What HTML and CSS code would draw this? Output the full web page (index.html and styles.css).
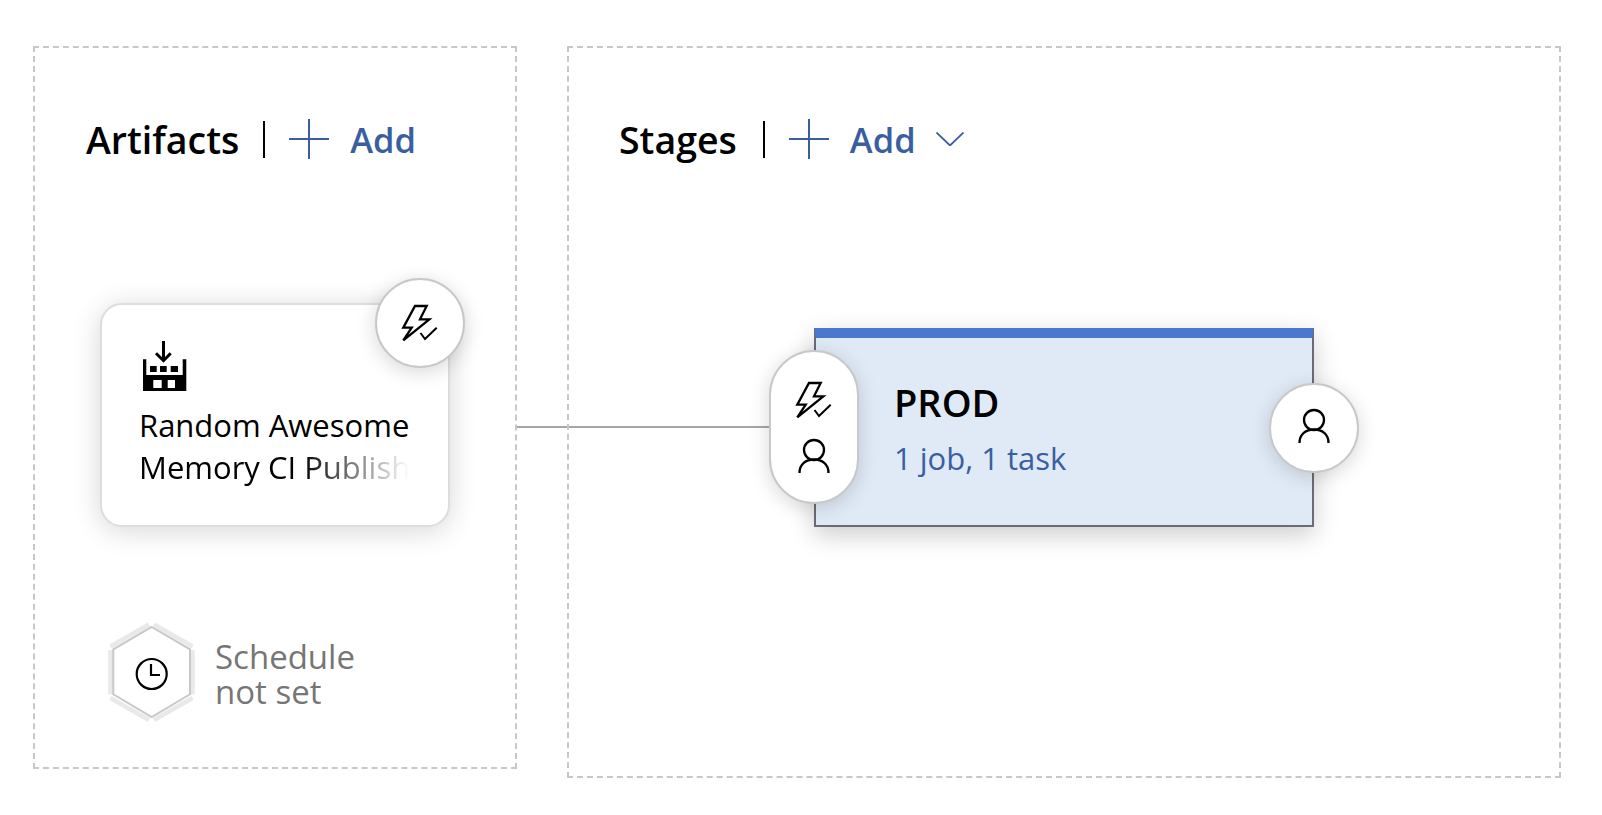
FILE: index.html
```html
<!DOCTYPE html>
<html lang="en">
<head>
<meta charset="utf-8">
<title>Pipeline</title>
<link rel="stylesheet" href="styles.css">
</head>
<body>
<svg class="defs" width="0" height="0" aria-hidden="true">
  <symbol id="bolt" viewBox="0 0 40 40">
    <path d="M15 3H26.700L20 16.300H29.300L3.300 37.300L11.700 24.700H3.300Z" fill="none" stroke="#000" stroke-width="2.300"/>
    <path d="M20.500 30L25 36L36.700 24.700" fill="none" stroke="#000" stroke-width="2"/>
  </symbol>
  <symbol id="person" viewBox="0 0 40 40">
    <circle cx="20" cy="12" r="10" fill="none" stroke="#000" stroke-width="2.300"/>
    <path d="M5.500 35C5.500 26 12 21.500 20 21.500S34.500 26 34.500 35" fill="none" stroke="#000" stroke-width="2.300"/>
  </symbol>
  <symbol id="plus" viewBox="0 0 40 40">
    <path d="M0 20H40M20 0V40" fill="none" stroke="#3a5fa0" stroke-width="2"/>
  </symbol>
</svg>
<main class="canvas">
  <div class="connector"></div>
  <section class="panel panel-artifacts">
    <header class="head">
      <h2 class="title">Artifacts</h2>
      <span class="sep"></span>
      <svg class="plus"><use href="#plus"/></svg>
      <span class="add">Add</span>
    </header>
    <div class="artifact">
      <svg class="build" viewBox="0 0 44 52">
        <path d="M0 18.300H3.300V34H39.700V18.300H43.300V50H0ZM10.300 39V47H18.700V39ZM24.700 39V47H32V39ZM7 25H13.700V31H7ZM17 25H23.700V31H17ZM27.700 25H35V31H27.700Z" fill="#000" fill-rule="evenodd"/>
        <path d="M20.500 0V19M13 12.300L20.500 19.700L27.700 12.300" fill="none" stroke="#000" stroke-width="3"/>
      </svg>
      <p class="artifact-name"><span class="line">Random Awesome</span> <span class="line line-fade">Memory CI Publish</span></p>
      <div class="circle circle-trigger"><svg class="ico"><use href="#bolt"/></svg></div>
    </div>
    <div class="schedule">
      <svg class="hex" viewBox="0 0 96 106">
        <g fill="none" stroke="#e9e9e9" stroke-width="4.500">
          <path d="M6.500 30V74.500"/><path d="M88.500 30V74.500"/>
          <path d="M6.500 26.500L45 4.500"/><path d="M50 4.500L88.500 26.500"/>
          <path d="M6.500 78L45 100"/><path d="M50 100L88.500 78"/>
        </g>
        <path d="M47.700 7L86 29.300V74.300L47.700 97L9.300 74.300V29.300Z" fill="#fff" stroke="#c8c8c8" stroke-width="2"/>
        <circle cx="47.700" cy="54" r="15" fill="none" stroke="#000" stroke-width="2.200"/>
        <path d="M47 44V55H56" fill="none" stroke="#000" stroke-width="2.200"/>
      </svg>
      <p class="schedule-text">Schedule<br>not set</p>
    </div>
  </section>
  <section class="panel panel-stages">
    <header class="head">
      <h2 class="title">Stages</h2>
      <span class="sep"></span>
      <svg class="plus"><use href="#plus"/></svg>
      <span class="add">Add</span>
      <svg class="chev" viewBox="0 0 28 14"><path d="M0.500 0.500L14 13.500L27.500 0.500" fill="none" stroke="#3a5fa0" stroke-width="1.800"/></svg>
    </header>
    <div class="stage">
      <h3 class="stage-name">PROD</h3>
      <div class="stage-tasks">1 job, 1 task</div>
      <div class="pill">
        <svg class="ico"><use href="#bolt"/></svg>
        <svg class="ico"><use href="#person"/></svg>
      </div>
      <div class="circle circle-post"><svg class="ico"><use href="#person"/></svg></div>
    </div>
  </section>
</main>
</body>
</html>
```

FILE: styles.css
```css
* { box-sizing: border-box; }
html, body { margin: 0; background: #fff; }
body { font-family: "Open Sans", "Noto Sans", sans-serif; height: 815px; overflow: hidden; }
.defs { position: absolute; }
.canvas { position: relative; display: flex; align-items: flex-start; gap: 50px; padding: 46px 0 0 33px; }
.panel { border: 2px dashed #c8c8c8; position: relative; }
.panel-artifacts { width: 484px; height: 723px; padding-top: 71px; }
.panel-stages { width: 994px; height: 732px; padding-top: 71px; }
.connector { position: absolute; left: 516px; top: 426px; width: 256px; height: 2px; background: #a6a6a6; }
.head { display: flex; align-items: center; height: 40px; }
.panel-artifacts .head { margin-left: 51px; }
.panel-stages .head { margin-left: 50px; }
.title { margin: 0; font-size: 37.500px; font-weight: 600; color: #000; line-height: 40px; position: relative; top: 1px; }
.sep { width: 2px; height: 37px; background: #000; margin: 0 24px 0 26px; }
.panel-artifacts .sep { margin-left: 24px; }
.plus { width: 40px; height: 40px; flex: none; }
.add { font-size: 34.500px; font-weight: 600; color: #3a5fa0; margin-left: 21px; line-height: 40px; position: relative; top: 1px; }
.chev { width: 28px; height: 14px; margin-left: 20px; }
.artifact { position: relative; margin: 144px 0 0 65px; width: 350px; height: 224px; background: #fff; border: 2px solid #ddd; border-radius: 22px; box-shadow: 0 4px 28px rgba(0, 0, 0, .16); padding: 36px 0 0 37px; }
.build { display: block; width: 44px; height: 52px; margin-left: 4px; }
.artifact-name { margin: 11px 0 0; font-size: 31px; line-height: 42px; color: #000; }
.line { display: block; white-space: nowrap; width: 272px; overflow: hidden; }
.line-fade { -webkit-mask-image: linear-gradient(to left, transparent 0, transparent 2px, #000 110px); mask-image: linear-gradient(to left, transparent 0, transparent 2px, #000 110px); }
.circle { position: absolute; width: 90px; height: 90px; border-radius: 50%; background: #fff; border: 2px solid #c8c8c8; display: flex; align-items: center; justify-content: center; box-shadow: 0 4px 20px rgba(0, 0, 0, .16); }
.circle-trigger { right: -17px; top: -27px; }
.ico { width: 40px; height: 40px; display: block; }
.schedule { display: flex; align-items: center; margin: 93px 0 0 69px; }
.hex { width: 96px; height: 106px; flex: none; }
.schedule-text { margin: 0 0 0 15px; font-size: 33px; line-height: 35px; color: #767676; position: relative; top: 1px; }
.stage { position: relative; margin: 169px 0 0 245px; width: 500px; height: 199px; background: #e0eaf6; border: 2px solid #6b6b76; border-top: 10px solid #4a78cd; box-shadow: 0 8px 24px rgba(0, 0, 0, .2); padding: 42px 0 0 78px; }
.stage-name { margin: 0; font-size: 38px; font-weight: 600; line-height: 44px; color: #000; }
.stage-tasks { font-size: 31px; line-height: 42px; margin-top: 13px; color: #3a5fa0; }
.pill { position: absolute; left: -47px; top: 12px; width: 90px; height: 154px; border-radius: 45px; background: #fff; border: 2px solid #c8c8c8; box-shadow: 0 4px 20px rgba(0, 0, 0, .16); display: flex; flex-direction: column; align-items: center; gap: 18px; padding-top: 28px; }
.circle-post { right: -47px; top: 45px; }
```
